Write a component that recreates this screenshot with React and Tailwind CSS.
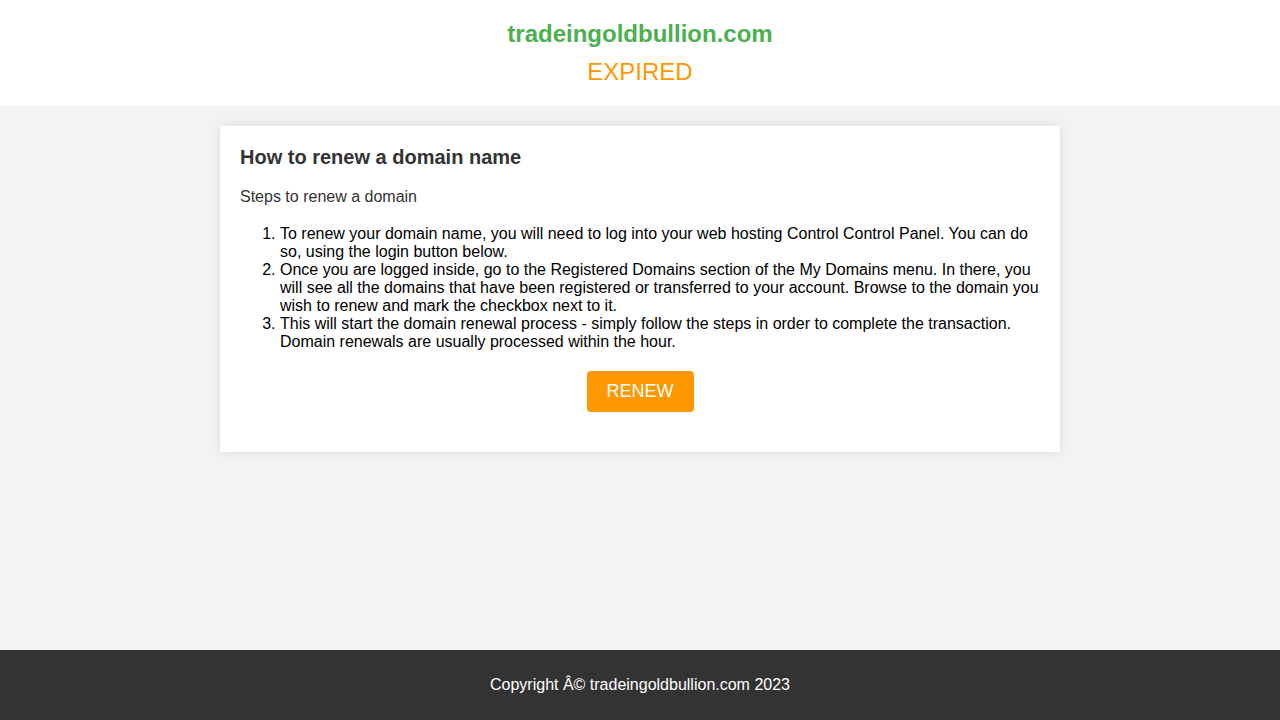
import React from 'react';

const steps = [
  'To renew your domain name, you will need to log into your web hosting Control Control Panel. You can do so, using the login button below.',
  'Once you are logged inside, go to the Registered Domains section of the My Domains menu. In there, you will see all the domains that have been registered or transferred to your account. Browse to the domain you wish to renew and mark the checkbox next to it.',
  'This will start the domain renewal process - simply follow the steps in order to complete the transaction. Domain renewals are usually processed within the hour.'
];

const App = () => {
  return (
    <div className="min-h-screen flex flex-col bg-[#f3f3f3] font-['Liberation_Sans',Arial,sans-serif]">
      {/* Header */}
      <header className="bg-white py-5 text-center">
        <h1 className="text-[24px] leading-[28px] font-bold text-[#4caf50]">tradeingoldbullion.com</h1>
        <div className="mt-[10px] text-[24px] leading-[28px] text-[#ff9800]">EXPIRED</div>
      </header>

      {/* Main card */}
      <main className="flex-1">
        <div className="mx-auto mt-5 w-[840px] bg-white p-5 shadow-[0_0_10px_rgba(0,0,0,0.1)]">
          <h2 className="text-[20px] leading-[23px] font-bold text-[#333]">How to renew a domain name</h2>
          <p className="mt-[19px] text-[16px] leading-[18px] text-[#333]">Steps to renew a domain</p>
          <ol className="mt-[19px] list-decimal pl-10 text-[16px] leading-[18px] text-black">
            {steps.map((step, i) => (
              <li key={i}>{step}</li>
            ))}
          </ol>
          <div className="mt-[20px] mb-5 flex justify-center">
            <button className="rounded bg-[#ff9800] px-5 py-[10px] text-[18px] leading-[21px] text-white">
              RENEW
            </button>
          </div>
        </div>
      </main>

      {/* Footer */}
      <footer className="h-[70px] bg-[#333] flex items-center justify-center text-[16px] text-white">
        Copyright Â© tradeingoldbullion.com 2023
      </footer>
    </div>
  );
};

export default App;
